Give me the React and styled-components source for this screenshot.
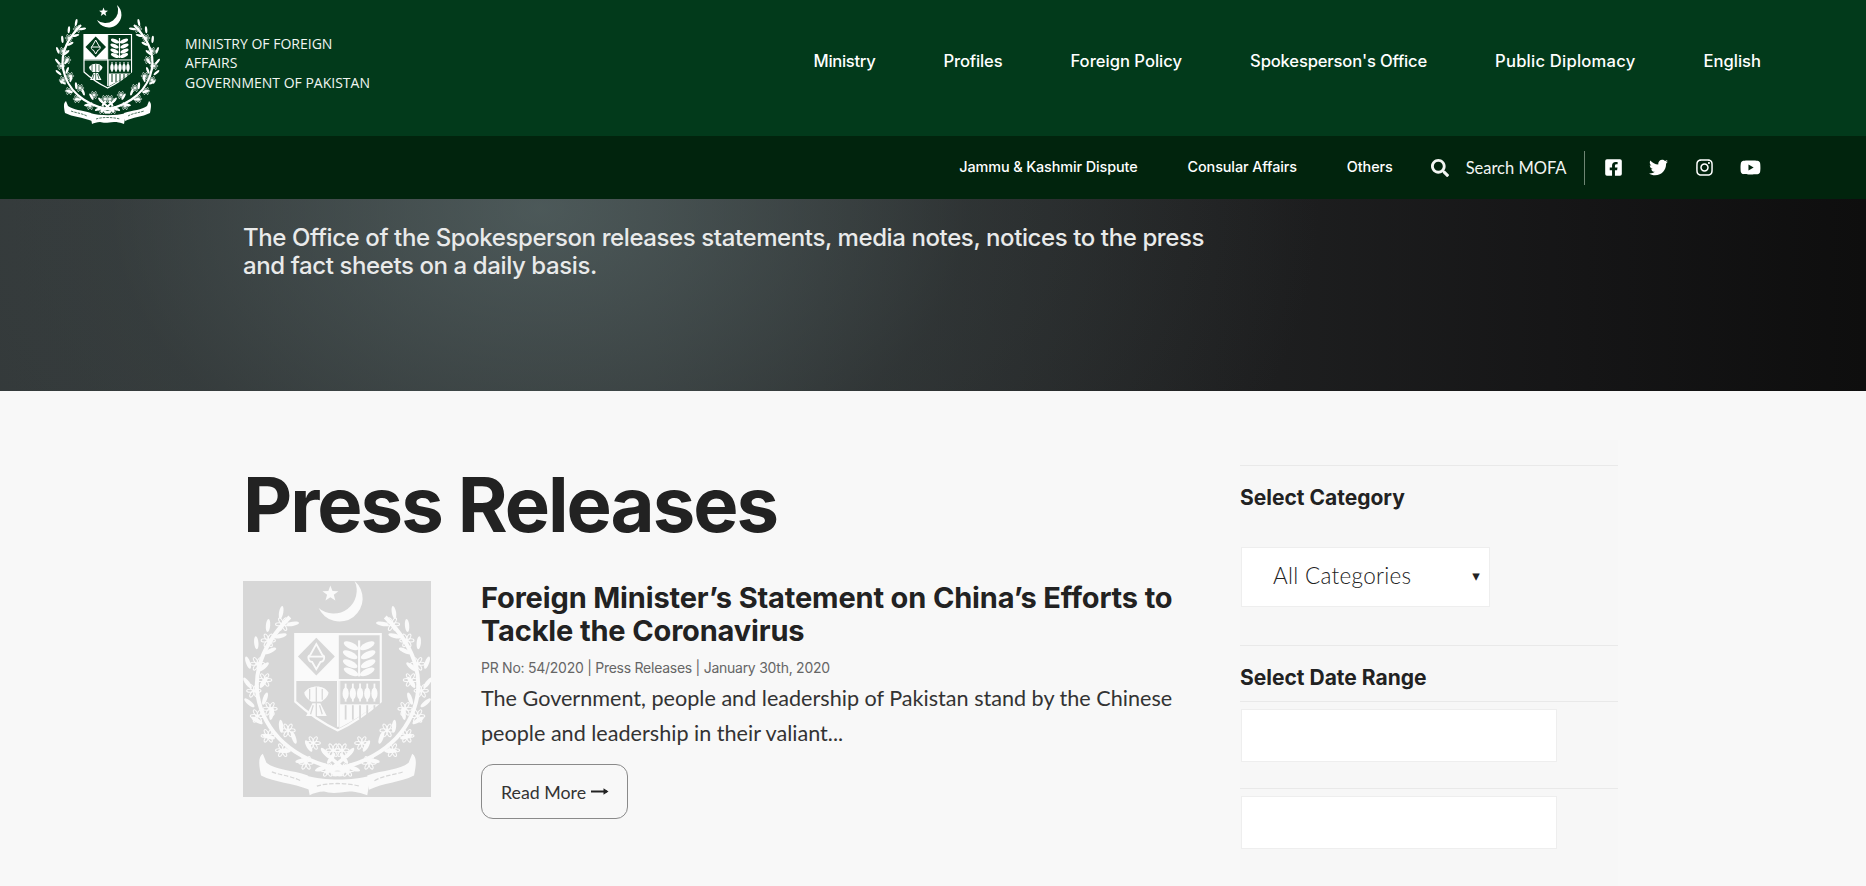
import React from "react";
import styled, { createGlobalStyle } from "styled-components";
import { FaSearch, FaFacebookSquare, FaTwitter, FaInstagram, FaYoutube } from "react-icons/fa";

const Global = createGlobalStyle`
  html, body { margin: 0; padding: 0; background: #f8f8f8; overflow-x: hidden; }
  * { box-sizing: border-box; }
`;

const poppins = `Inter, "Liberation Sans", sans-serif`;
const nunito = `Lato, "Open Sans", sans-serif`;

const Page = styled.div`
  width: 1866px;
  height: 886px;
  overflow: hidden;
  background: #f8f8f8;
`;
const TopBar = styled.header`
  height: 136px;
  background: #023a1b;
  display: flex;
  align-items: flex-start;
  padding: 0 105px 0 40px;
`;
const Brand = styled.div`
  display: flex;
  align-items: flex-start;
  gap: 15px;
  flex: 1;
`;
const BrandText = styled.div`
  font: 400 14px/19.4px "Open Sans", sans-serif;
  color: #f2f6f2;
  padding-top: 34px;
  width: 200px;
`;
const MainNav = styled.nav`
  display: flex;
  gap: 68px;
  padding-top: 50px;
`;
const NavLink = styled.a`
  font: 500 16.6px/22px ${poppins};
  letter-spacing: ${(p) => p.$ls || "0"};
  color: #fff;
  white-space: nowrap;
`;
const SubBar = styled.div`
  height: 63px;
  background: #01240d;
  display: flex;
  justify-content: flex-end;
  align-items: center;
  padding-right: 105px;
`;
const SubLink = styled.a`
  font: 500 14.4px/20px ${poppins};
  letter-spacing: -0.1px;
  color: #fff;
  margin-right: 50px;
  white-space: nowrap;
  position: relative;
  top: -1px;
  &:nth-of-type(3) { margin-right: 38px; }
`;
const SearchBox = styled.div`
  display: flex;
  align-items: center;
  gap: 17px;
  color: #f2f5f2;
  font: 400 16.5px/22px ${nunito};
  padding-right: 17px;
  border-right: 1px solid #6f8674;
  height: 34px;
`;
const SocialRow = styled.div`
  display: flex;
  align-items: center;
  gap: 26.5px;
  margin-left: 19px;
  color: #fff;
  font-size: 19px;
  line-height: 0;
`;
const WideIcon = styled.span`
  font-size: 21px;
  line-height: 0;
`;
const Hero = styled.section`
  height: 192px;
  padding: 25px 0 0 243px;
  background:
    radial-gradient(ellipse 780px 520px at 540px 5%, rgba(88, 104, 104, 0.7), rgba(62, 72, 72, 0.35) 55%, rgba(50, 55, 55, 0) 100%),
    linear-gradient(90deg, #323738 0%, #303435 35%, #1f2021 65%, #151516 85%, #0e0e0e 100%);
`;
const HeroText = styled.p`
  margin: 0;
  width: 980px;
  font: 500 24px/27.5px ${poppins};
  letter-spacing: -0.4px;
  color: #e9eaea;
`;
const Main = styled.main`
  display: flex;
  padding-left: 243px;
`;
const Content = styled.div`
  width: 997px;
  padding-top: 68px;
`;
const Title = styled.h1`
  margin: 0 0 31px;
  font: 700 76px/91px ${poppins};
  letter-spacing: -2px;
  color: #222;
`;
const Article = styled.article`
  display: flex;
  gap: 50px;
  align-items: flex-start;
`;
const Thumb = styled.div`
  width: 188px;
  height: 216px;
  background: #d7d7d7;
  flex: none;
  line-height: 0;
`;
const Body = styled.div`
  width: 700px;
`;
const ArticleTitle = styled.h2`
  margin: 0;
  font: 700 29px/33px ${poppins};
  letter-spacing: -0.15px;
  color: #222;
`;
const Meta = styled.div`
  margin-top: 11px;
  font: 400 14px/20px ${poppins};
  letter-spacing: -0.26px;
  color: #666;
`;
const Excerpt = styled.p`
  margin: 3px 0 0;
  width: 710px;
  font: 400 21.6px/34.5px ${nunito};
  color: #333;
`;
const ReadMore = styled.a`
  display: inline-flex;
  align-items: center;
  gap: 5px;
  height: 55px;
  margin-top: 14px;
  padding: 0 18px 0 19px;
  border: 1px solid #8a8a8a;
  border-radius: 12px;
  font: 400 17.8px/24px ${nunito};
  color: #333;
`;
const Sidebar = styled.aside`
  width: 378px;
  height: 446px;
  margin-top: 49px;
  padding-top: 25px;
  background: #f7f7f7;
`;
const Group = styled.div`
  border-top: 1px solid #e9e9e9;
  padding-top: ${(p) => p.$pt || "7px"};
  padding-bottom: ${(p) => p.$pb || "26px"};
`;
const Heading = styled.h3`
  margin: 0;
  font: 700 21px/30px ${poppins};
  color: #222;
`;
const SelectBox = styled.div`
  width: 249px;
  height: 60px;
  margin: 34px 0 0 1px;
  padding: 0 9px 3px 31px;
  display: flex;
  align-items: center;
  justify-content: space-between;
  background: #fff;
  border: 1px solid #eee;
  font: 300 22.5px/30px ${nunito};
  letter-spacing: 0.3px;
  color: #222;
`;
const Caret = styled.span`
  font: 400 15px/12px "DejaVu Sans", sans-serif;
  color: #222;
`;
const DateInput = styled.input`
  display: block;
  width: 316px;
  height: 53px;
  margin-left: 1px;
  background: #fff;
  border: 1px solid #eee;
  outline: none;
`;

const STEM = [
  [70, 108, 200], [60, 105, 195], [50, 101, 205], [41, 96, 215], [33, 89, 230],
  [27, 81, 245], [23, 72, 255], [22, 62, 268], [22, 52, 285], [26, 42, 300], [32, 33, 310], [39, 26, 315],
];
const FLOWERS = [
  [62, 110], [50, 106], [37, 99], [29, 91], [23, 80], [21, 66], [23, 51], [29, 38], [37, 29],
  [70, 99], [54, 95], [40, 88], [30, 76], [27, 60],
];

function Wreath({ fg }) {
  return (
    <g>
      <path d="M74 110C52 108 32 96 25 76C20 62 22 44 41 25" fill="none" stroke={fg} strokeWidth="2.2" />
      {STEM.map(([x, y, a], i) => (
        <g key={i} transform={`translate(${x} ${y}) rotate(${a})`}>
          <ellipse cx="3" cy="-3.4" rx="3.6" ry="1.2" fill={fg} transform="rotate(-35)" />
          <ellipse cx="3" cy="3.4" rx="3.6" ry="1.2" fill={fg} transform="rotate(35)" />
        </g>
      ))}
      {FLOWERS.map(([x, y], i) => (
        <g key={i} transform={`translate(${x} ${y}) scale(0.72)`}>
          {[0, 60, 120, 180, 240, 300].map((r) => (
            <ellipse key={r} cx="2.9" cy="0" rx="2.6" ry="1.2" fill="none" stroke={fg} strokeWidth="0.8" transform={`rotate(${r})`} />
          ))}
          <circle r="1" fill={fg} />
        </g>
      ))}
    </g>
  );
}

function Emblem({ fg, bg, width, height, viewBox }) {
  const leaf = (x, y, r) => (
    <ellipse cx={x} cy={y} rx="4.4" ry="1.8" fill={fg} transform={`rotate(${r} ${x} ${y})`} />
  );
  return (
    <svg width={width} height={height} viewBox={viewBox} aria-hidden="true">
      <path d="M77 5A12.8 12.8 0 1 1 57 20A12.8 12.8 0 0 0 77 5Z" fill={fg} />
      <polygon
        points="63.5,7.5 64.7,10.6 68,10.7 65.4,12.7 66.3,15.9 63.5,14 60.8,15.9 61.7,12.7 59.1,10.7 62.4,10.6"
        fill={fg}
      />
      <Wreath fg={fg} />
      <g transform="translate(135 0) scale(-1 1)">
        <Wreath fg={fg} />
      </g>
      <path d="M74 112L60 100M61 112L75 100" stroke={fg} strokeWidth="2" />

      <path d="M44 34.5H91.5V72Q80 82 67.7 88Q55 82 44 72Z" fill={bg} stroke={fg} strokeWidth="1.2" />
      <rect x="44" y="34.5" width="23.5" height="25" fill={fg} />
      <polygon points="55.7,36.5 66,47 55.7,57.5 45.5,47" fill={bg} />
      <path d="M55.7 40L59 46C61 47 60 50 58 50L55.7 54L53.4 50C51.4 50 50.4 47 52.4 46Z" fill="none" stroke={fg} strokeWidth="1" />
      <path d="M51 47H60.5" stroke={fg} strokeWidth="1" />
      <path d="M67.7 34.5V86" stroke={fg} strokeWidth="1" />
      <path d="M44 60H91.5" stroke={fg} strokeWidth="1.2" />

      <path d="M79.5 38V58" stroke={fg} strokeWidth="1.2" />
      {leaf(75, 41, 25)}{leaf(84, 41, -25)}
      {leaf(74.5, 46, 25)}{leaf(84.5, 46, -25)}
      {leaf(74.5, 51, 25)}{leaf(84.5, 51, -25)}
      {leaf(75, 55.5, 25)}{leaf(84, 55.5, -25)}

      <path d="M49 67C52 62.5 60 62.5 62.5 67C62 70.5 59 71 58 73L61.5 80L50 80L53.5 73C52.5 71 49.5 70.5 49 67Z" fill={fg} />
      <path d="M52 65V71M55.7 64V80M59 65V71M52.5 79L54 74M59 79L57.5 74" stroke={bg} strokeWidth="0.7" />
      <path d="M52.8 72.5H58.6" stroke={bg} strokeWidth="0.9" />

      <path d="M68.5 60.5H91V72Q80 81 68.5 86.6Z" fill={fg} />
      <rect x="69" y="60.5" width="22" height="13" fill={bg} />
      {[71, 75, 79, 83, 87].map((x) => (
        <g key={x}>
          <path d={`M${x + 1} 62V72`} stroke={fg} strokeWidth="1" />
          <ellipse cx={x + 1} cy="67.5" rx="1.7" ry="3.4" fill={fg} />
          <path d={`M${x + 1} 74V82`} stroke={bg} strokeWidth="1" />
        </g>
      ))}

      <path d="M26 101C23 103 24 108 25 113C33 117 42 117 52 121L51 113C42 110 33 110 28 106Z" fill={fg} />
      <path d="M50 113C60 116 76 116 86 113L84 124C78 122 76 122 74 122C67 123 63 123 60 122C57 122 54 123 52 124Z" fill={fg} />
      <path d="M109 101C112 103 111 108 110 113C102 117 93 117 85 121L84 113C93 110 102 110 107 106Z" fill={fg} />
      <path d="M31 111C36 113 41 113 47 116M56 119C62 117 72 117 80 119M88 116C93 113 98 113 104 111" fill="none" stroke={bg} strokeWidth="0.7" strokeDasharray="2.5 1" />
    </svg>
  );
}

const LongArrow = () => (
  <svg width="18" height="12" viewBox="0 0 18 12" aria-hidden="true">
    <path d="M0 5.5H16" stroke="#222" strokeWidth="2" />
    <path d="M12.5 2.2L17.5 5.5L12.5 8.8Z" fill="#222" />
  </svg>
);

export default function App() {
  return (
    <Page>
      <Global />
      <TopBar>
        <Brand>
          <Emblem fg="#fff" bg="#023a1b" width={130} height={130} viewBox="0 0 130 130" />
          <BrandText>
            MINISTRY OF FOREIGN
            <br />
            AFFAIRS
            <br />
            GOVERNMENT OF PAKISTAN
          </BrandText>
        </Brand>
        <MainNav>
          <NavLink $ls="-0.3px">Ministry</NavLink>
          <NavLink $ls="-0.15px">Profiles</NavLink>
          <NavLink>Foreign Policy</NavLink>
          <NavLink $ls="-0.17px">Spokesperson's Office</NavLink>
          <NavLink $ls="0.22px">Public Diplomacy</NavLink>
          <NavLink>English</NavLink>
        </MainNav>
      </TopBar>
      <SubBar>
        <SubLink>Jammu &amp; Kashmir Dispute</SubLink>
        <SubLink>Consular Affairs</SubLink>
        <SubLink>Others</SubLink>
        <SearchBox>
          <FaSearch size={18} />
          <span>Search MOFA</span>
        </SearchBox>
        <SocialRow>
          <FaFacebookSquare />
          <FaTwitter />
          <FaInstagram />
          <WideIcon>
            <FaYoutube />
          </WideIcon>
        </SocialRow>
      </SubBar>
      <Hero>
        <HeroText>
          The Office of the Spokesperson releases statements, media notes, notices to the press and fact sheets on a
          daily basis.
        </HeroText>
      </Hero>
      <Main>
        <Content>
          <Title>Press Releases</Title>
          <Article>
            <Thumb>
              <Emblem fg="#fafafa" bg="#d7d7d7" width={188} height={216} viewBox="15 5 104.4 120" />
            </Thumb>
            <Body>
              <ArticleTitle>Foreign Minister’s Statement on China’s Efforts to Tackle the Coronavirus</ArticleTitle>
              <Meta>PR No: 54/2020 | Press Releases | January 30th, 2020</Meta>
              <Excerpt>The Government, people and leadership of Pakistan stand by the Chinese people and leadership in their valiant...</Excerpt>
              <ReadMore>
                Read More <LongArrow />
              </ReadMore>
            </Body>
          </Article>
        </Content>
        <Sidebar>
          <Group $pt="17px" $pb="38px">
            <Heading>Select Category</Heading>
            <SelectBox>
              All Categories
              <Caret>▾</Caret>
            </SelectBox>
          </Group>
          <Group $pt="17px" $pb="8px">
            <Heading>Select Date Range</Heading>
          </Group>
          <Group>
            <DateInput />
          </Group>
          <Group>
            <DateInput />
          </Group>
        </Sidebar>
      </Main>
    </Page>
  );
}
